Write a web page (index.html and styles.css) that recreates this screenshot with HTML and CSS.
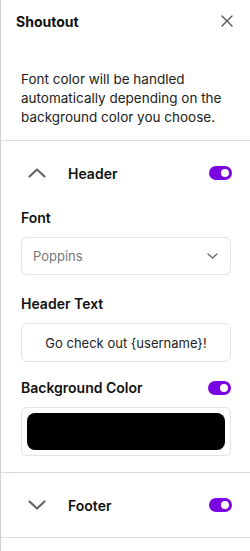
FILE: index.html
```html
<!DOCTYPE html>
<html lang="en">
<head>
  <meta charset="UTF-8" />
  <meta name="viewport" content="width=device-width, initial-scale=1.0" />
  <title>Shoutout</title>
  <link rel="stylesheet" href="styles.css">
</head>

<body>
  <div class="panel">
    <!-- Panel title -->
    <div class="panel-top">
      <div class="panel-title">Shoutout</div>
      <button class="close-button" aria-label="Close">
        <svg width="12" height="12" viewBox="0 0 12 12"><path d="M1 1L11 11M11 1L1 11" stroke="#555" stroke-width="1.4" fill="none" stroke-linecap="round"/></svg>
      </button>
    </div>

    <p class="intro">Font color will be handled automatically depending on the background color you choose.</p>

    <!-- Header section -->
    <div class="section">
      <div class="section-head">
        <svg class="chevron" width="18" height="10" viewBox="0 0 18 10"><path d="M1.5 8.5L9 1.5L16.5 8.5" stroke="#666" stroke-width="2.2" fill="none" stroke-linecap="round" stroke-linejoin="round"/></svg>
        <div class="section-name">Header</div>
        <span class="toggle"></span>
      </div>

      <div class="section-body">
        <div class="field-label">Font</div>
        <div class="select-box">
          <span>Poppins</span>
          <svg width="11" height="6" viewBox="0 0 11 6"><path d="M1 1L5.5 5L10 1" stroke="#666" stroke-width="1.3" fill="none" stroke-linecap="round" stroke-linejoin="round"/></svg>
        </div>

        <div class="field-label">Header Text</div>
        <div class="text-box">Go check out {username}!</div>

        <div class="field-label field-row">
          <span>Background Color</span>
          <span class="toggle"></span>
        </div>
        <div class="color-box">
          <div class="swatch"></div>
        </div>
      </div>
    </div>

    <!-- Footer section -->
    <div class="section">
      <div class="section-head">
        <svg class="chevron" width="18" height="10" viewBox="0 0 18 10"><path d="M1.5 1.5L9 8.5L16.5 1.5" stroke="#666" stroke-width="2.2" fill="none" stroke-linecap="round" stroke-linejoin="round"/></svg>
        <div class="section-name">Footer</div>
        <span class="toggle"></span>
      </div>
    </div>
  </div>
</body>
</html>
```

FILE: styles.css
```css
body {
  margin: 0;
  background: #fff;
  font-family: 'Inter', sans-serif;
  color: #111;
}

.panel {
  min-height: 551px;
  border-left: 1px solid #cfcfd4;
  box-sizing: border-box;
}

.panel-top {
  display: flex;
  align-items: center;
  justify-content: space-between;
  height: 42px;
  padding: 0 17px 0 15px;
}

.panel-title {
  font-size: 14px;
  font-weight: 700;
}

.close-button {
  background: none;
  border: none;
  padding: 0;
  display: flex;
  cursor: pointer;
}

.intro {
  margin: 0;
  padding: 28px 14px 13px 20px;
  font-size: 13.5px;
  line-height: 19px;
  color: #222;
}

.section {
  border-top: 1px solid #d7dde7;
}

.section:last-child {
  border-bottom: 1px solid #d7dde7;
}

.section-head {
  display: flex;
  align-items: center;
  height: 64px;
  padding: 0 18px 0 27px;
}

.chevron {
  flex-shrink: 0;
}

.section-name {
  flex-grow: 1;
  margin-left: 22px;
  font-size: 14px;
  font-weight: 600;
}

.toggle {
  position: relative;
  width: 23px;
  height: 14px;
  border-radius: 7px;
  background: #7a06e4;
  flex-shrink: 0;
}

.toggle::after {
  content: "";
  position: absolute;
  right: 3px;
  top: 3px;
  width: 8px;
  height: 8px;
  border-radius: 50%;
  background: #fff;
}

.section-body {
  padding: 3px 19px 16px 20px;
}

.field-label {
  height: 20px;
  line-height: 20px;
  font-size: 14px;
  font-weight: 600;
  margin-bottom: 9px;
}

.field-row {
  display: flex;
  align-items: center;
  justify-content: space-between;
}

.select-box {
  display: flex;
  align-items: center;
  justify-content: space-between;
  height: 38px;
  box-sizing: border-box;
  border: 1px solid #e2e2e8;
  border-radius: 6px;
  padding: 0 12px 0 11px;
  font-size: 13px;
  color: #777;
  margin-bottom: 19px;
}

.text-box {
  height: 39px;
  box-sizing: border-box;
  border: 1px solid #e2e2e8;
  border-radius: 6px;
  display: flex;
  align-items: center;
  justify-content: center;
  font-size: 13px;
  color: #222;
  margin-bottom: 16px;
}

.color-box {
  height: 49px;
  box-sizing: border-box;
  border: 1px solid #e2e2e8;
  border-radius: 6px;
  padding: 5px 5px;
}

.swatch {
  height: 100%;
  background: #000;
  border-radius: 8px;
}
```
